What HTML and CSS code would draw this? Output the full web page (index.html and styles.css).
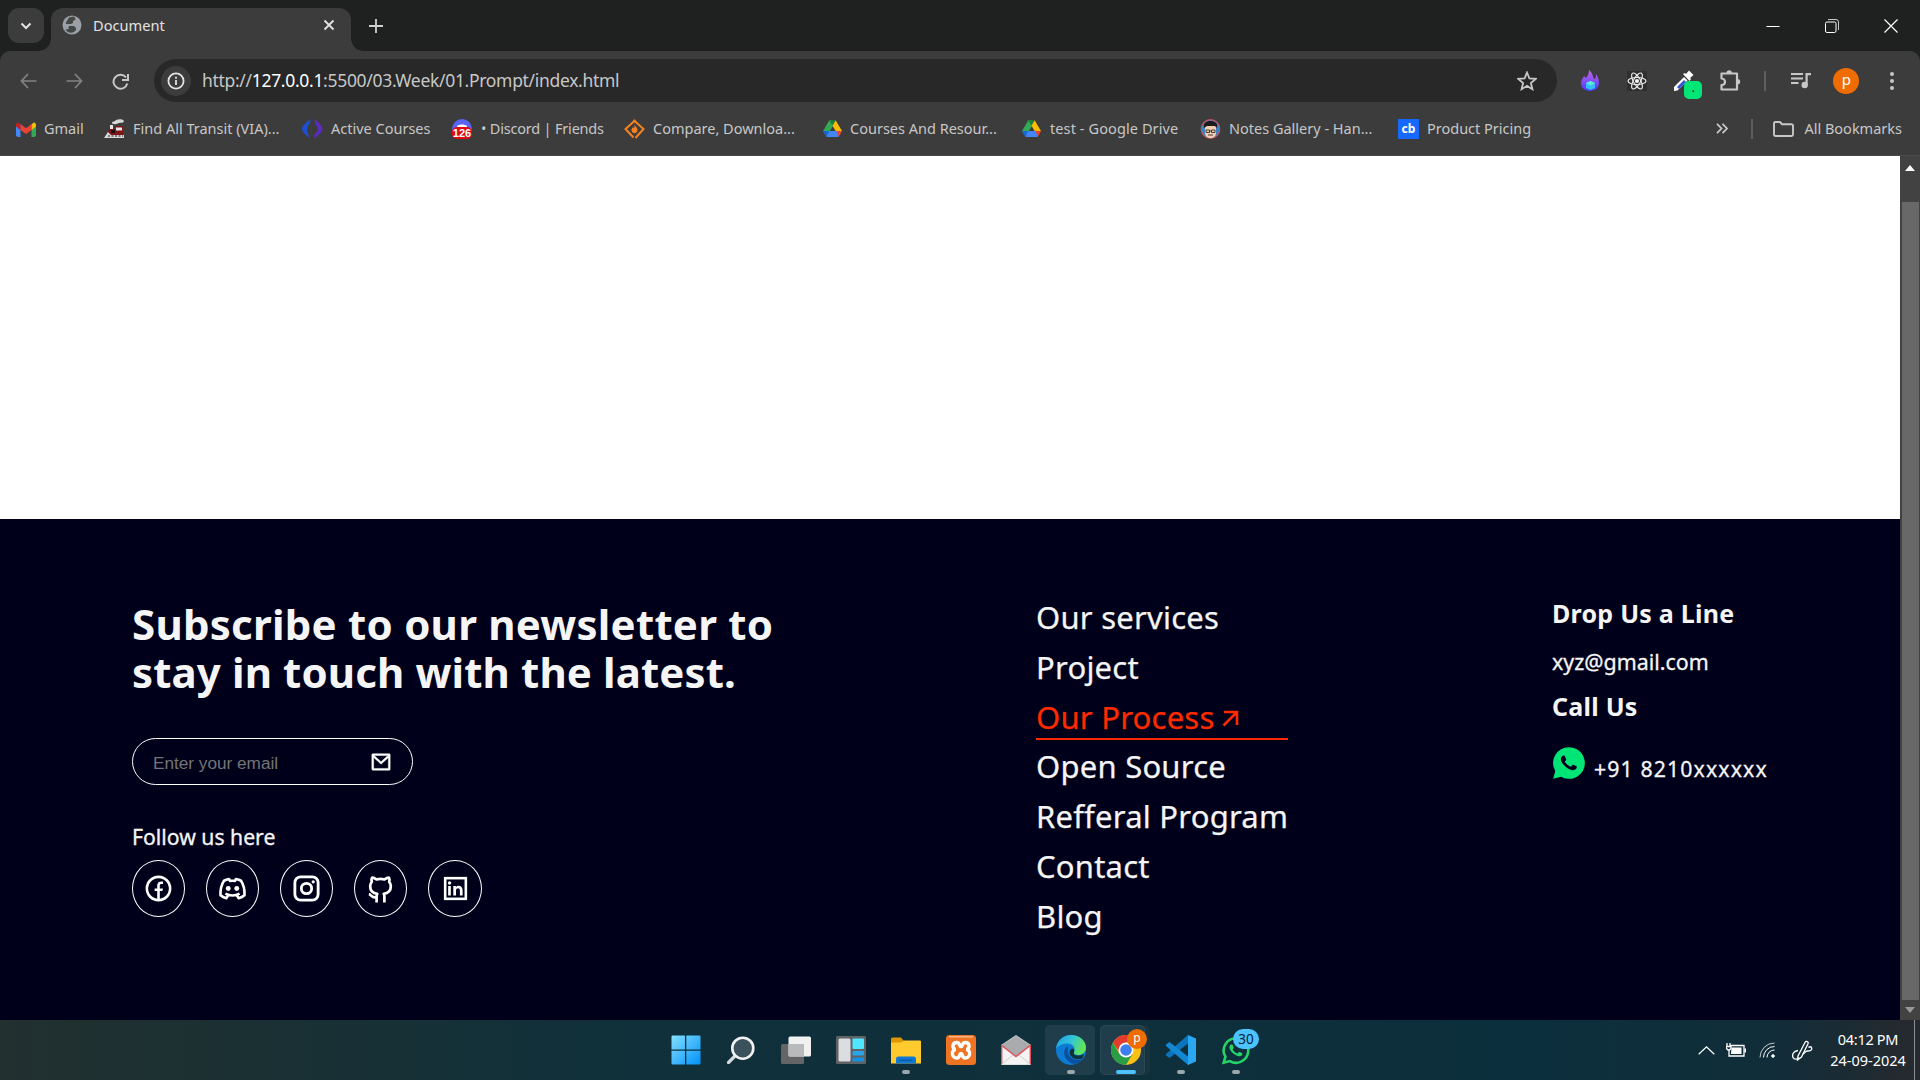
FILE: index.html
```html
<!DOCTYPE html>
<html lang="en">
<head>
<meta charset="utf-8">
<title>Document</title>
<link rel="stylesheet" href="styles.css">
</head>
<body>
<svg class="defs" width="0" height="0">
  <defs>
    <symbol id="drive" viewBox="0 0 24 22">
      <path fill="#34a853" d="M8 0h4L13.500 6 4.500 20 0 13.500z"/>
      <path fill="#188038" d="M8 0h8l-4 7z"/>
      <path fill="#fbbc04" d="M16 0l8 13.500h-8L12 7z"/>
      <path fill="#ea4335" d="M16 13.500h8L20 21z"/>
      <path fill="#4285f4" d="M7 13.500h10L20 21H4z"/>
      <path fill="#1967d2" d="M0 13.500h8L4 21z"/>
    </symbol>
    <symbol id="handset" viewBox="0 0 24 24">
      <path d="M8.590 7.300c-.4 0-.6.100-.86.340-.55.500-.83 1.200-.83 1.980 0 .5.130.97.330 1.420.41.900 1.080 1.850 1.970 2.740.21.200.42.420.650.620 1.100.970 2.420 1.670 3.840 2.050l.57.080c.37.020.95-.02 1.390-.240.3-.150.600-.370.840-.600.2-.240.330-.600.390-1.030.03-.3.020-.5-.17-.640l-1.990-.890c-.25-.100-.45-.050-.550.090l-.8.940c-.1.110-.2.150-.36.130-.8-.260-1.500-.700-2.020-1.180-.45-.4-.99-1-1.380-1.620-.12-.200-.2-.300-.1-.560l.36-.410.260-.370c.12-.200.15-.380.090-.540l-.87-2.040c-.1-.230-.4-.270-.76-.270z"/>
    </symbol>
  </defs>
</svg>

<header class="browser">
  <div class="tabstrip">
    <div class="tab-search"><svg width="12" height="8" viewBox="0 0 12 8"><path d="M1.500 1.500L6 6l4.500-4.500" fill="none" stroke="#e3e3e3" stroke-width="2"/></svg></div>
    <div class="tab">
      <svg width="20" height="20" viewBox="0 0 20 20"><circle cx="10" cy="10" r="9.500" fill="#9aa0a6"/><path d="M7 2.500L12 1.500l2 3-3 1.500v2l-2 1v2h3l2 2v2l-2 2c-4 2-7 0-8.500-2.500L7 14l-3-4V7.500z" fill="#3c3c3c" opacity=".9"/><path d="M4 9h5l1 2H7l-1 3-3-2zM13 4l4 2v4l-3-1z" fill="#9aa0a6"/></svg>
      <span class="tab-title">Document</span>
      <svg width="12" height="12" viewBox="0 0 12 12"><path d="M1.500 1.500l9 9m0-9l-9 9" stroke="#e3e3e3" stroke-width="1.800"/></svg>
    </div>
    <svg class="new-tab" width="14" height="14" viewBox="0 0 14 14"><path d="M7 0v14M0 7h14" stroke="#d0d0d0" stroke-width="1.800"/></svg>
    <div class="window-controls">
      <span><svg width="14" height="14"><path d="M.5 7.500h13" stroke="#fff"/></svg></span>
      <span><svg width="14" height="14" viewBox="0 0 14 14" fill="none" stroke="#fff"><rect x=".5" y="3" width="10.500" height="10.500" rx="1.500"/><path d="M3 .5h8A2.500 2.500 0 0 1 13.500 3v8" opacity=".75"/></svg></span>
      <span><svg width="14" height="14"><path d="M.5.500l13 13m0-13l-13 13" stroke="#fff" stroke-width="1.200"/></svg></span>
    </div>
  </div>

  <div class="toolbar">
    <div class="nav">
      <span><svg width="17" height="16" viewBox="0 0 17 16" fill="none" stroke="#838383" stroke-width="1.700"><path d="M16.500 8H1.500M8 1L1.500 8 8 15"/></svg></span>
      <span><svg width="17" height="16" viewBox="0 0 17 16" fill="none" stroke="#838383" stroke-width="1.700"><path d="M.5 8h15M9 1l6.500 7L9 15"/></svg></span>
      <span><svg width="17" height="17" viewBox="0 0 17 17" fill="none" stroke="#c7c7c7" stroke-width="2"><path d="M15.300 10.500A7 7 0 1 1 14 4.300"/><path d="M16 1v6h-6" /></svg></span>
    </div>
    <div class="omnibox">
      <span class="site-info"><svg width="18" height="18" viewBox="0 0 18 18"><circle cx="9" cy="9" r="7.600" fill="none" stroke="#e3e3e3" stroke-width="1.800"/><path d="M9 8v5M9 4.800v2" stroke="#e3e3e3" stroke-width="1.800"/></svg></span>
      <span class="url">http://<b>127.0.0.1</b>:5500/03.Week/01.Prompt/index.html</span>
      <svg width="20" height="20" viewBox="0 0 20 20"><path d="M10 1.500l2.400 5.900 6.300.5-4.800 4.100 1.500 6.200L10 14.900l-5.400 3.300 1.500-6.200L1.300 7.900l6.300-.5z" fill="none" stroke="#c7c7c7" stroke-width="1.800"/></svg>
    </div>
    <div class="extensions">
      <span class="slot"><svg width="18" height="21" viewBox="0 0 18 21"><defs><linearGradient id="flame" x1="0" y1="0" x2="0" y2="1"><stop offset="0" stop-color="#c764f0"/><stop offset="1" stop-color="#4a3cf5"/></linearGradient></defs><path d="M8 0c5 4 3 8 6 9 1-1 1-3 1-5 2 3 3 6 3 9 0 5-4 8-9 8s-9-3-9-8c0-3 2-5 3-7l2 2C7 6 8 3 8 0z" fill="url(#flame)"/><path d="M5 13l4.500-2 4.500 2v5l-4.500 2L5 18z" fill="#38bdf8"/><path d="M5 13l4.500-2 4.500 2-4.500 2.500z" fill="#5eead4"/></svg></span>
      <span class="slot"><span class="react"><svg width="20" height="20" viewBox="0 0 20 20" fill="none" stroke="#e8e8e8" stroke-width="1.200"><ellipse cx="10" cy="10" rx="9" ry="3.500"/><ellipse cx="10" cy="10" rx="9" ry="3.500" transform="rotate(60 10 10)"/><ellipse cx="10" cy="10" rx="9" ry="3.500" transform="rotate(120 10 10)"/><circle cx="10" cy="10" r="1.500" fill="#fff"/></svg></span></span>
      <span class="slot picker"><svg width="21" height="22" viewBox="0 0 21 22"><path d="M1 17L11 7l3.500 3.500-10 10L1 21z" fill="#fff"/><path d="M4 17l7-7 2 2-7 7z" fill="#3356d6"/><path d="M10 4l2-1 1 1 3-3.500L20.500 5 17 8l1 1-1.500 2z" fill="#fff"/></svg><i class="picker-badge">.</i></span>
      <span class="slot"><svg width="22" height="22" viewBox="0 0 22 22"><path d="M2.500 3.500h15.500v16H2.500v-4.500c3 0 3.500-1.500 3.500-3S5 8.500 2.500 8.500z" fill="none" stroke="#c7c7c7" stroke-width="2.200" stroke-linejoin="round"/><path d="M7.500 3a2.700 2.700 0 0 1 5.400 0zM18.500 9a2.700 2.700 0 0 1 0 5.400z" fill="#c7c7c7"/></svg></span>
      <i class="sep"></i>
      <svg class="media" width="20" height="16" viewBox="0 0 20 16" fill="#c7c7c7"><path d="M0 0h12v2H0zM0 4.500h12v2H0zM0 9h7.500v2H0zM14.500 0H20v2.200h-3.300V12h-2.200z"/><circle cx="13.700" cy="12" r="3.200"/></svg>
      <span class="avatar">p</span>
      <svg class="dots" width="4" height="18" viewBox="0 0 4 18" fill="#c7c7c7"><circle cx="2" cy="2" r="2"/><circle cx="2" cy="9" r="2"/><circle cx="2" cy="16" r="2"/></svg>
    </div>
  </div>

  <div class="bookmarks">
    <nav class="bookmark-list">
      <a><svg width="20" height="15" viewBox="0 0 20 15"><path d="M0 2h4.500v13H1.500L0 13.500z" fill="#4285f4"/><path d="M15.500 2H20v11.500L18.500 15h-3z" fill="#34a853"/><path d="M15.500 2.500L18 .3 20 2v2.500l-4.500 3.500z" fill="#fbbc04"/><path d="M4.500 2l5.500 4.300L15.500 2v6L10 12 4.500 8z" fill="#ea4335"/><path d="M0 2L2 .3l2.500 2.200V8L0 4.500z" fill="#c5221f"/></svg><span>Gmail</span></a>
      <a><svg width="21" height="20" viewBox="0 0 21 20"><path d="M8 4.500C8 1.500 11 3 12 1c3-1 7-1 8 1-1 3-4 1-6 2.500-2 1-4 1-6 0z" fill="#d6d6d6"/><path d="M6 8h3v2h3V7h7v9H5l-1-3z" fill="#7f1518"/><path d="M6 6h3v4H6zM12 8.500h6v3h-6z" fill="#e8e8e8"/><path d="M7 11h4v3H7z" fill="#111"/><path d="M0 19l4-6 3 3h13v3z" fill="#d9d9d9"/><path d="M4 17h15" stroke="#222" stroke-dasharray="2 1.500"/></svg><span>Find All Transit (VIA)...</span></a>
      <a><svg width="21" height="20" viewBox="0 0 21 20"><path d="M9 0C3 4 0 7 0 10c0 3 4 6 8 9.500-1-3-3-6-3-9C5 8 8 5 9 0z" fill="#1f4fd1"/><path d="M12.500 0c5 4 8 7 8 10 0 3-4 6-8 9.500v-4c2-2 3-3 3-5.500s-3-5-3-10z" fill="#5b2bc0"/></svg><span>Active Courses</span></a>
      <a class="discord"><svg width="22" height="20" viewBox="0 0 22 20"><circle cx="11" cy="10" r="10" fill="#5865f2"/><path d="M6 7c3-2 7-2 10 0v5H6z" fill="#fff"/></svg><i class="count">126</i><span>• Discord | Friends</span></a>
      <a><svg width="21" height="20" viewBox="0 0 21 20"><path d="M11.500 1L1.500 10 9.500 18.500M9.500 1l10 9-8 9" fill="none" stroke="#f58220" stroke-width="2"/><path d="M10.500 5c0 2 3 3.500 3 6 0 2-1.500 3.200-3 3.200S7.500 13 7.500 11c0-1.500 1-2 1.500-3 .7.500 1 1 1 1.500.8-1 .5-3 .5-4.500z" fill="#f58220"/></svg><span>Compare, Downloa...</span></a>
      <a><svg width="19" height="18"><use href="#drive"/></svg><span>Courses And Resour...</span></a>
      <a class="wide"><svg width="19" height="18"><use href="#drive"/></svg><span>test - Google Drive</span></a>
      <a><svg width="21" height="20" viewBox="0 0 21 20"><circle cx="10.500" cy="10" r="9.300" fill="#3b82c4" stroke="#c45464" stroke-width="1.200"/><path d="M5 9c0-3 2-4 5.500-4S16 6 16 9v5c0 3-2 5-5.500 5S5 17 5 14z" fill="#f1cdb4"/><path d="M4 9c-1-5 2-7 6.500-7S18 4 17 9l-2-2H7z" fill="#1d1a1c"/><path d="M6 11h3.500v2.500H6zM11.500 11H15v2.500h-3.500zM9 12h3M8 16h5" fill="none" stroke="#332" stroke-width=".9"/></svg><span>Notes Gallery - Han...</span></a>
      <a><b class="cb">cb</b><span>Product Pricing</span></a>
    </nav>
    <svg class="more" width="12" height="11" viewBox="0 0 12 11"><path d="M1 .8l4.500 4.700L1 10.200M6.500.8L11 5.500l-4.500 4.700" fill="none" stroke="#c7c7c7" stroke-width="1.800"/></svg>
    <i class="sep"></i>
    <svg class="folder" width="21" height="16" viewBox="0 0 21 16"><path d="M1 2.500A1.500 1.500 0 0 1 2.500 1H7l2 2.200h9.500A1.500 1.500 0 0 1 20 4.700v8.800a1.500 1.500 0 0 1-1.500 1.500h-16A1.500 1.500 0 0 1 1 13.500z" fill="none" stroke="#c7c7c7" stroke-width="1.900"/></svg>
    <span class="all">All Bookmarks</span>
  </div>
</header>

<main class="viewport">
  <div class="page">
    <footer class="footer">
      <section class="newsletter">
        <h1>Subscribe to our newsletter to<br><span>stay in touch with the latest.</span></h1>
        <div class="email">
          <span>Enter your email</span>
          <svg width="22" height="22" viewBox="0 0 24 24" fill="#fff" stroke="#fff" stroke-width=".5"><path d="M3 3H21C21.5523 3 22 3.44772 22 4V20C22 20.5523 21.5523 21 21 21H3C2.44772 21 2 20.5523 2 20V4C2 3.44772 2.44772 3 3 3ZM20 7.23792L12.0718 14.338L4 7.21594V19H20V7.23792ZM4.51146 5L12.0619 11.662L19.501 5H4.51146Z"/></svg>
        </div>
        <p class="follow">Follow us here</p>
        <div class="social">
          <a><svg viewBox="0 0 24 24" fill="#fff"><path d="M13 19.938A8 8 0 1 0 11 19.938V14H9v-2h2v-1.654c0-1.337.139-1.822.4-2.311.262-.489.646-.873 1.135-1.134.382-.205.857-.328 1.687-.381.329-.021.755.006 1.278.08v1.900H15c-.917 0-1.295.043-1.524.166a.870.870 0 0 0-.36.360c-.122.229-.116.404-.116 1.320V12h2.500l-.5 2h-2zM12 22a10 10 0 1 1 0-20 10 10 0 0 1 0 20z"/></svg></a>
          <a><svg viewBox="0 0 24 24" fill="none" stroke="#fff" stroke-width="2" stroke-linejoin="round"><path d="M15.300 17.300l1.500 2.200c1.800-.5 3.200-1.200 4.500-2.300.2-4.200-.5-7.800-2.700-11.200-1.300-.7-2.600-1.100-3.900-1.400l-.8 1.500a12 12 0 0 0-3.800 0l-.8-1.500c-1.300.3-2.600.7-3.900 1.400C3.200 9.400 2.500 13 2.700 17.200c1.300 1.100 2.700 1.800 4.500 2.300l1.500-2.200M6.500 15.900c3.500 1.900 7.500 1.900 11 0"/><g fill="#fff" stroke="none"><circle cx="8.700" cy="12" r="1.900"/><circle cx="15.300" cy="12" r="1.900"/></g></svg></a>
          <a><svg viewBox="0 0 24 24" fill="none" stroke="#fff" stroke-width="2.200"><rect x="3" y="3" width="18" height="18" rx="4.500"/><circle cx="12" cy="12" r="4"/><circle cx="17.200" cy="6.800" r="1.250" fill="#fff" stroke="none"/></svg></a>
          <a><svg viewBox="0 0 24 24" fill="none" stroke="#fff" stroke-width="2.100" stroke-linejoin="round"><path d="M9.200 18.700c-3.800 1.300-4.300-2-6.200-2.300M15 22.800v-4.800c0-.9 0-1.300-.5-1.900 2.800-.3 5.500-1.400 5.500-6a4.600 4.600 0 0 0-1.300-3.200 4.200 4.200 0 0 0-.1-3.200s-1.100-.3-3.500 1.300a12.300 12.300 0 0 0-6.200 0C6.500 3.400 5.400 3.700 5.400 3.700a4.200 4.200 0 0 0-.1 3.200A4.600 4.600 0 0 0 4 10.100c0 4.600 2.700 5.700 5.500 6-.5.6-.5 1.200-.5 1.900v4.800"/></svg></a>
          <a class="last"><svg viewBox="0 0 24 24"><rect x="4" y="4" width="16" height="16" fill="none" stroke="#fff" stroke-width="2"/><g fill="#fff"><circle cx="7.400" cy="7.700" r="1.300"/><path d="M6.300 10h2.100v7.500H6.300zM10.300 10h2v1c1.600-2 5.200-1.300 5.200 2.300v4.200h-2.100v-4c0-2.400-3-2.200-3 0v4h-2.100z"/></g></svg></a>
        </div>
      </section>

      <nav class="links">
        <a>Our services</a>
        <a>Project</a>
        <a class="current">Our Process<svg width="17" height="17" viewBox="0 0 17 17"><path d="M1.500 15.500l13-13M2 2h13v13" fill="none" stroke="#ff2a00" stroke-width="2.600"/></svg></a>
        <a>Open Source</a>
        <a>Refferal Program</a>
        <a>Contact</a>
        <a>Blog</a>
      </nav>

      <section class="contact">
        <h2>Drop Us a Line</h2>
        <p class="mail">xyz@gmail.com</p>
        <h2>Call Us</h2>
        <p class="phone"><svg width="38" height="38" viewBox="0 0 24 24"><path d="M12 2a10 10 0 1 1-5.030 18.640L2 22l1.360-4.970A10 10 0 0 1 12 2z" fill="#00e676"/><use href="#handset" fill="#00001b"/></svg><span>+91 8210xxxxxx</span></p>
      </section>
    </footer>
  </div>
  <div class="scrollbar">
    <svg width="10" height="6"><path d="M0 6l5-6 5 6z" fill="#fff"/></svg>
    <div class="thumb"></div>
    <svg width="10" height="6"><path d="M0 0l5 6 5-6z" fill="#9a9a9a"/></svg>
  </div>
</main>

<footer class="taskbar">
  <div class="apps">
    <span class="app"><svg width="30" height="30" viewBox="0 0 30 30"><defs><linearGradient id="win" x1="0" y1="0" x2="1" y2="1"><stop offset="0" stop-color="#85e0ff"/><stop offset="1" stop-color="#0090f8"/></linearGradient></defs><path fill="url(#win)" d="M1.500.5H14v14H.5v-13a1 1 0 0 1 1-1zM15.300.5h13.200a1 1 0 0 1 1 1v13H15.300zM.5 15.800H14v13.700H1.500a1 1 0 0 1-1-1zM15.300 15.800h14.200v12.700a1 1 0 0 1-1 1H15.300z"/></svg></span>
    <span class="app"><svg width="28" height="28" viewBox="0 0 28 28"><path d="M9 19l-7.500 7.500" stroke="#d5d9db" stroke-width="3.200" stroke-linecap="round"/><circle cx="15.800" cy="12.200" r="10.500" fill="#3b525c" stroke="#f2f2f2" stroke-width="2.600"/></svg></span>
    <span class="app"><svg width="30" height="28" viewBox="0 0 30 28"><rect y="8" width="23" height="20" rx="1.500" fill="#646566"/><rect x="7.500" y=".5" width="22.500" height="20" rx="1.500" fill="#f1f1f1"/><path d="M7.500 8H23v12.500H9a1.500 1.500 0 0 1-1.500-1.500z" fill="#b9babb"/></svg></span>
    <span class="app"><svg width="30" height="28" viewBox="0 0 30 28"><rect width="30" height="28" rx="1.500" fill="#5f6366"/><rect x="2.500" y="2.500" width="12" height="23" rx="1.500" fill="#dcdde0"/><rect x="16.500" y="2.500" width="11.500" height="10.500" rx="1" fill="#50e6ff"/><rect x="16.500" y="15" width="11.500" height="4.500" rx="1" fill="#27a6ea"/><rect x="16.500" y="21.500" width="11.500" height="4" rx="1" fill="#1690e3"/></svg></span>
    <span class="app running"><svg width="30" height="27" viewBox="0 0 30 27"><path d="M0 2A1.500 1.500 0 0 1 1.500.5H10l2.500 3-2.500 3H0z" fill="#dd9800"/><path d="M0 5.500h10l2.500-2H29a1 1 0 0 1 1 1V26.500H0z" fill="#ffca2d"/><path d="M5 26.500V22a2.500 2.500 0 0 1 2.500-2.500h15A2.500 2.500 0 0 1 25 22v4.500z" fill="#0f78d4"/><path d="M8.500 23.200h13" stroke="#0a4d92"/></svg></span>
    <span class="app"><svg width="30" height="30" viewBox="0 0 30 30"><rect width="30" height="30" rx="3.500" fill="#ee7424"/><path d="M3 1.800h24" stroke="#f9b584" stroke-width="1.500"/><path d="M10 14.500c-4 0-4.500-7 1-7 3 0 2 4 4 4s1-4 4-4c5.500 0 5 7 1 7 5 0 5 8.500-1 8.500-3 0-2-4.500-4-4.500s-1 4.500-4 4.500c-6 0-6-8.500-1-8.500z" fill="none" stroke="#fff" stroke-width="3.400"/></svg></span>
    <span class="app"><svg width="30" height="30" viewBox="0 0 30 30"><path d="M0 10L15 0l15 10v20H0z" fill="#c9cccd"/><path d="M1 10L15 1l14 9-9 11H10z" fill="#a9abac"/><path d="M.7 10.500v19h28.600v-19L15 21.500z" fill="#f4f4f4"/><path d="M.7 29.500v-19L15 21.500l14.300-11v19" fill="none" stroke="#e0525c" stroke-width="1.400"/><path d="M1 29l11-9M29 29l-11-9" stroke="#cfcfcf"/></svg></span>
    <span class="app open running"><svg width="30" height="30" viewBox="0 0 30 30"><defs><linearGradient id="edge" x1="0" y1="0" x2="1" y2=".3"><stop offset="0" stop-color="#1b9de2"/><stop offset=".55" stop-color="#33c4d8"/><stop offset="1" stop-color="#5fe35a"/></linearGradient></defs><circle cx="15" cy="15" r="15" fill="#0d7bd3"/><path d="M0 14C1 5 7.500 0 15 0c9 0 15 6 15 12.500 0 5-4 7.500-8 7.500-3 0-5-1-4.500-2.500C20 14 18 8.500 11.500 8.500 6 8.500 1.500 11 0 14z" fill="url(#edge)"/><path d="M12 11c-6 3-5 13 3 17 4 2 9 .5 12-4-7 3-14-1-15-6-.4-3 0-5 0-7z" fill="#0b4f9f"/><path d="M18 17.500c-1 2.500 4 4.500 10 1.500l-1.500 4.500c-6 2.500-13-1-13-6 0-2 1.500-4 3-4s2.500 2 1.500 4z" fill="#10313f"/></svg></span>
    <span class="app open stacked active"><svg width="30" height="30" viewBox="0 0 30 30"><circle cx="15" cy="15" r="15" fill="#fbc116"/><path d="M2 7.500a15 15 0 0 1 26 0H15L9 18z" fill="#e33b2e"/><path d="M2 7.500a15 15 0 0 0 13 22.500l6.500-11-13 0z" fill="#2a9d48"/><circle cx="15" cy="15" r="7.500" fill="#fff"/><circle cx="15" cy="15" r="5.800" fill="#3d7ff0"/></svg><i class="profile">p</i></span>
    <span class="app running"><svg width="30" height="30" viewBox="0 0 30 30"><path d="M22 0v8.500L3.500 23 0 20.500V19z" fill="#0b74bd"/><path d="M22 30v-8.500L3.500 7 0 9.500V11z" fill="#1287d2"/><path d="M22 0l8 3.500v23L22 30z" fill="#2ba7f2"/></svg></span>
    <span class="app running"><svg width="32" height="31" viewBox="0 0 24 24"><path d="M12 2.500a9.500 9.500 0 1 1-4.800 17.700L2.500 21.500l1.300-4.700A9.500 9.500 0 0 1 12 2.500z" fill="none" stroke="#25d366" stroke-width="2"/><use href="#handset" fill="#25d366"/></svg><i class="unread">30</i></span>
  </div>
  <div class="tray">
    <svg width="17" height="9" viewBox="0 0 17 9"><path d="M.7 8.300L8.500.9l7.800 7.400" fill="none" stroke="#fff" stroke-width="1.300"/></svg>
    <svg width="20" height="14" viewBox="0 0 20 14"><path d="M4 2.500h14v10.500H3V7M1 0v3M4 0v3M0 3.500h5v2L3.500 7H2L.5 5.500z" fill="none" stroke="#fff" stroke-width="1.300"/><path d="M5.500 4.500h10v6.500H5zM18.500 5.500H20v4h-1.500z" fill="#fff"/></svg>
    <svg class="wifi" width="16" height="16" viewBox="0 0 16 16" fill="none" stroke="#fff"><path d="M1 15.500A14.500 14.500 0 0 1 15.500 1" opacity=".75"/><path d="M4.500 15.500a11 11 0 0 1 11-11M8 15.500A7.500 7.500 0 0 1 15.500 8" /><circle cx="14" cy="14" r="1.300" fill="#fff"/></svg>
    <svg class="pen" width="21" height="21" viewBox="0 0 21 21" fill="none" stroke="#fff" stroke-width="1.300"><path d="M6 16L13 2.500c1-2 4-1 3 1.200L9.500 17 5.500 20z"/><path d="M6 10.500C1 11 0 15 1 17.500c1 2.500 5 2 6 0M10.500 14c3 0 2-3 5-3s5-1 4-3.500c-.5-1-2-1-3 0"/></svg>
    <div class="clock"><span class="time">04:12 PM</span><span class="date">24-09-2024</span></div>
    <i class="show-desktop"></i>
  </div>
</footer>
</body>
</html>
```
FILE: styles.css
```css
* { box-sizing: border-box; margin: 0; padding: 0; }
body {
  width: 1920px; height: 1080px; overflow: hidden;
  display: flex; flex-direction: column;
  font-family: "Noto Sans", "Open Sans", sans-serif;
  background: #1f2120; color: #fff; white-space: nowrap;
}
svg { display: block; flex: none; }
i { font-style: normal; }
.defs { position: absolute; }

/* browser chrome */
.browser { height: 156px; flex: none; }
.tabstrip { height: 51px; display: flex; align-items: center; padding-left: 8px; }
.tab-search {
  width: 36px; height: 35px; border-radius: 11px; background: #3c3c3c;
  display: flex; align-items: center; justify-content: center;
}
.tab {
  position: relative; align-self: flex-end; width: 300px; height: 43px; margin-left: 7px;
  padding: 0 16px 9px 11px; display: flex; align-items: center;
  background: #3c3c3c; border-radius: 12px 12px 0 0;
}
.tab::before, .tab::after { content: ""; position: absolute; bottom: 0; width: 12px; height: 12px; }
.tab::before { left: -12px; background: radial-gradient(circle at 0 0, transparent 11.500px, #3c3c3c 12px); }
.tab::after { right: -12px; background: radial-gradient(circle at 100% 0, transparent 11.500px, #3c3c3c 12px); }
.tab-title { margin-left: 11px; flex: 1; font-size: 14.600px; color: #e3e3e3; }
.new-tab { margin-left: 18px; }
.window-controls { margin-left: auto; display: flex; }
.window-controls span { width: 59px; display: flex; justify-content: center; }

.toolbar {
  height: 60px; padding: 8px 26px 9px 5px; display: flex; align-items: center;
  background: #3c3c3c; border-radius: 10px 10px 0 0;
}
.nav { display: flex; width: 149px; padding-top: 1px; }
.nav span { width: 46.200px; display: flex; justify-content: center; }
.omnibox {
  width: 1403px; height: 43px; padding: 0 20px 0 7px; border-radius: 22px; background: #282828;
  display: flex; align-items: center;
}
.site-info {
  width: 30px; height: 30px; border-radius: 50%; background: #3c3c3c;
  display: flex; align-items: center; justify-content: center;
}
.url { flex: 1; margin: 0 0 1px 11px; font-size: 17.500px; letter-spacing: -.31px; color: #c7c7c7; }
.url b { font-weight: 400; color: #fff; }
.extensions { flex: 1; display: flex; align-items: center; padding-left: 10px; }
.slot { position: relative; width: 46.600px; display: flex; justify-content: center; }
.react { background: #2f2f2f; }
.picker-badge {
  position: absolute; left: 24px; top: 11px; width: 18px; height: 18px; border-radius: 5px;
  background: #00e676; color: #111; font-size: 13px; line-height: 12px; text-align: center;
}
.sep { width: 2px; height: 20px; background: #5e5e5e; }
.extensions .sep { margin-left: 11px; }
.media { margin-left: 25px; }
.avatar {
  width: 26px; height: 26px; margin-left: 22px; border-radius: 50%; background: #ef6c00;
  font-size: 15px; line-height: 23px; text-align: center;
}
.dots { margin-left: auto; }

.bookmarks {
  height: 45px; padding: 0 18px 8px 16px; display: flex; align-items: flex-start;
  background: #3c3c3c; border-bottom: 1px solid #4a4a4a; color: #c7c7c7; font-size: 14.500px;
}
.bookmarks > * { margin-top: 8px; }
.bookmark-list { display: grid; grid-template-columns: 88px 198px 149px 173px 199px 199px 178px 198px 308px; }
.bookmarks a { position: relative; height: 20px; display: flex; align-items: center; gap: 8px; line-height: 20px; }
.bookmarks a span { margin-top: -2px; }
.bookmarks .discord span { letter-spacing: -.2px; }
.bookmarks .wide { gap: 9px; letter-spacing: .1px; }
.count {
  position: absolute; left: 1px; top: 8px; width: 20px; height: 12px; border-radius: 5px; background: #e00b12;
  color: #fff; font: bold 11px/12px "Liberation Sans", sans-serif; text-align: center;
}
.cb { width: 21px; height: 20px; background: #1768ff; color: #fff; font-size: 12px; line-height: 20px; text-align: center; }
.bookmarks .more { margin-top: 12px; margin-left: 10px; }
.bookmarks > .sep { margin-left: 23px; width: 3px; }
.bookmarks .folder { margin-left: 20px; margin-top: 10px; }
.bookmarks .all { margin: 7px 0 0 10px; line-height: 20px; }

/* page */
.viewport { height: 864px; flex: none; display: flex; }
.page { width: 1900px; background: #fff; padding-top: 363px; }
.footer { height: 501px; background: #00001b; display: flex; padding-left: 132px; color: #f5f5f5; }
.newsletter { width: 904px; padding-top: 81px; }
h1 { font-size: 42px; line-height: 48px; letter-spacing: .24px; }
h1 span { letter-spacing: .12px; }
.email {
  width: 281px; height: 47px; margin-top: 42px; padding: 0 20px;
  border: 1px solid #fff; border-radius: 24px; display: flex; align-items: center; justify-content: space-between;
  font: 17.200px "Liberation Sans", Arial, sans-serif; color: #757575;
}
.email span { padding-top: 3px; }
.follow { margin-top: 37px; font-size: 21.200px; line-height: 30px; }
.follow, .mail, .phone { -webkit-text-stroke: .3px #f5f5f5; }
.social { display: flex; gap: 21px; margin-top: 8px; }
.social a {
  width: 53px; height: 57px; border: 1px solid #fff; border-radius: 50%;
  display: flex; align-items: center; justify-content: center;
}
.social .last { width: 54px; }
.social svg { width: 31px; height: 31px; }
.links { width: 252px; padding-top: 78px; display: flex; flex-direction: column; gap: 6.830px; font-size: 31px; letter-spacing: .23px; -webkit-text-stroke: .25px; }
.links a { height: 43px; line-height: 43px; border-bottom: 2px solid transparent; display: flex; align-items: center; white-space: nowrap; }
.links .current { color: #ff2a00; border-color: #ff2a00; }
.current svg { margin: 2px 0 0 7px; }
.contact { margin-left: 264px; padding-top: 77px; }
h2 { font-size: 25px; line-height: 34px; letter-spacing: .25px; }
.mail { margin: 17px 0 12px; font-size: 21.400px; line-height: 30px; }
.phone { display: flex; margin: 21px 0 0 -2px; font-size: 21.300px; letter-spacing: 1.100px; line-height: 32px; }
.phone span { margin: 9px 0 0 6px; }

.scrollbar { width: 20px; background: #424242; display: flex; flex-direction: column; align-items: center; padding: 9px 0 7px; }
.thumb { width: 17px; height: 799px; margin: 31px 0 7px; background: #686868; }

/* taskbar */
.taskbar {
  height: 60px; flex: none; padding-left: 658px; display: flex; align-items: center;
  background: linear-gradient(90deg, #22302f, #10303a 32%, #0c2f3d 80%, #102d39 92%, #26292e);
}
.apps { display: flex; }
.app { position: relative; width: 55px; height: 50px; display: flex; align-items: center; justify-content: center; }
.app svg, .profile, .unread { z-index: 1; }
.open::before { content: ""; position: absolute; left: 2px; top: 0; width: 50px; height: 50px; border-radius: 5px; background: #1f3d4a; }
.stacked::before { width: 45px; box-shadow: 5px 0 0 #19333f, inset 0 0 0 1px #294753; }
.running::after, .app.active::after { content: ""; position: absolute; bottom: 1px; left: 24px; width: 8px; height: 4px; border-radius: 2px; background: #9aa7ac; }
.app.active::after { left: 18px; width: 20px; background: #4cc2ff; }
.profile {
  position: absolute; left: 29px; top: 4px; width: 20px; height: 20px; border-radius: 50%; background: #ef6c00;
  font-size: 12px; line-height: 17px; text-align: center;
}
.unread {
  position: absolute; left: 25px; top: 4px; width: 26px; height: 20px; border-radius: 10px; background: #4cc2ff;
  color: #06232e; font-size: 13.500px; line-height: 20px; text-align: center;
}
.tray { margin-left: auto; display: flex; align-items: center; padding-right: 5px; }
.tray svg { margin-right: 11px; }
.tray .wifi { margin-right: 17px; margin-left: 2px; }
.tray .pen { margin-right: 16px; }
.clock { width: 78px; display: flex; flex-direction: column; align-items: center; font-size: 14.500px; line-height: 21px; }
.time { letter-spacing: -.3px; }
.show-desktop { width: 1px; height: 60px; margin-left: 7px; background: #8a9094; }
```
